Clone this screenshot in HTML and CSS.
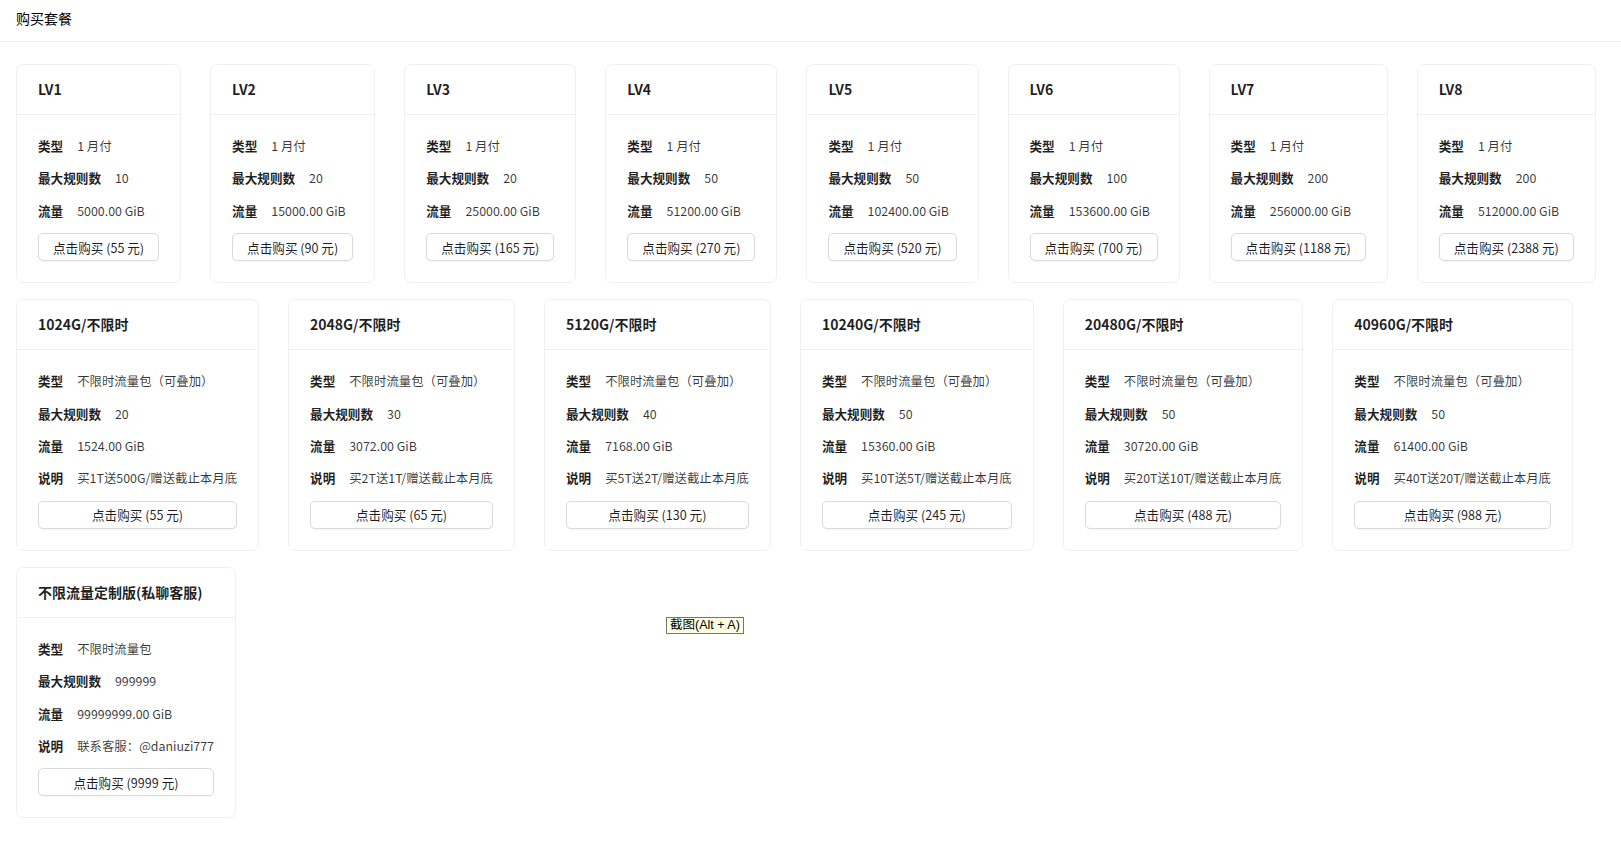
FILE: index.html
```html
<!DOCTYPE html>
<html lang="zh-CN">
<head>
<meta charset="utf-8">
<title>购买套餐</title>
<link rel="stylesheet" href="styles.css">
</head>
<body>
<div class="topbar"><span class="page-title">购买套餐</span></div>
<div class="content">
  <div class="cards">
    <div class="card"><div class="card-head">LV1</div><div class="card-body">
      <div class="row"><span class="lbl">类型</span><span class="val">1 月付</span></div>
      <div class="row"><span class="lbl">最大规则数</span><span class="val">10</span></div>
      <div class="row"><span class="lbl">流量</span><span class="val">5000.00 GiB</span></div>
      <button class="btn">点击购买 (55 元)</button></div></div>
    <div class="card"><div class="card-head">LV2</div><div class="card-body">
      <div class="row"><span class="lbl">类型</span><span class="val">1 月付</span></div>
      <div class="row"><span class="lbl">最大规则数</span><span class="val">20</span></div>
      <div class="row"><span class="lbl">流量</span><span class="val">15000.00 GiB</span></div>
      <button class="btn">点击购买 (90 元)</button></div></div>
    <div class="card"><div class="card-head">LV3</div><div class="card-body">
      <div class="row"><span class="lbl">类型</span><span class="val">1 月付</span></div>
      <div class="row"><span class="lbl">最大规则数</span><span class="val">20</span></div>
      <div class="row"><span class="lbl">流量</span><span class="val">25000.00 GiB</span></div>
      <button class="btn">点击购买 (165 元)</button></div></div>
    <div class="card"><div class="card-head">LV4</div><div class="card-body">
      <div class="row"><span class="lbl">类型</span><span class="val">1 月付</span></div>
      <div class="row"><span class="lbl">最大规则数</span><span class="val">50</span></div>
      <div class="row"><span class="lbl">流量</span><span class="val">51200.00 GiB</span></div>
      <button class="btn">点击购买 (270 元)</button></div></div>
    <div class="card"><div class="card-head">LV5</div><div class="card-body">
      <div class="row"><span class="lbl">类型</span><span class="val">1 月付</span></div>
      <div class="row"><span class="lbl">最大规则数</span><span class="val">50</span></div>
      <div class="row"><span class="lbl">流量</span><span class="val">102400.00 GiB</span></div>
      <button class="btn">点击购买 (520 元)</button></div></div>
    <div class="card"><div class="card-head">LV6</div><div class="card-body">
      <div class="row"><span class="lbl">类型</span><span class="val">1 月付</span></div>
      <div class="row"><span class="lbl">最大规则数</span><span class="val">100</span></div>
      <div class="row"><span class="lbl">流量</span><span class="val">153600.00 GiB</span></div>
      <button class="btn">点击购买 (700 元)</button></div></div>
    <div class="card"><div class="card-head">LV7</div><div class="card-body">
      <div class="row"><span class="lbl">类型</span><span class="val">1 月付</span></div>
      <div class="row"><span class="lbl">最大规则数</span><span class="val">200</span></div>
      <div class="row"><span class="lbl">流量</span><span class="val">256000.00 GiB</span></div>
      <button class="btn">点击购买 (1188 元)</button></div></div>
    <div class="card"><div class="card-head">LV8</div><div class="card-body">
      <div class="row"><span class="lbl">类型</span><span class="val">1 月付</span></div>
      <div class="row"><span class="lbl">最大规则数</span><span class="val">200</span></div>
      <div class="row"><span class="lbl">流量</span><span class="val">512000.00 GiB</span></div>
      <button class="btn">点击购买 (2388 元)</button></div></div>

    <div class="card"><div class="card-head">1024G/不限时</div><div class="card-body">
      <div class="row"><span class="lbl">类型</span><span class="val">不限时流量包（可叠加）</span></div>
      <div class="row"><span class="lbl">最大规则数</span><span class="val">20</span></div>
      <div class="row"><span class="lbl">流量</span><span class="val">1524.00 GiB</span></div>
      <div class="row"><span class="lbl">说明</span><span class="val">买1T送500G/赠送截止本月底</span></div>
      <button class="btn">点击购买 (55 元)</button></div></div>
    <div class="card"><div class="card-head">2048G/不限时</div><div class="card-body">
      <div class="row"><span class="lbl">类型</span><span class="val">不限时流量包（可叠加）</span></div>
      <div class="row"><span class="lbl">最大规则数</span><span class="val">30</span></div>
      <div class="row"><span class="lbl">流量</span><span class="val">3072.00 GiB</span></div>
      <div class="row"><span class="lbl">说明</span><span class="val">买2T送1T/赠送截止本月底</span></div>
      <button class="btn">点击购买 (65 元)</button></div></div>
    <div class="card"><div class="card-head">5120G/不限时</div><div class="card-body">
      <div class="row"><span class="lbl">类型</span><span class="val">不限时流量包（可叠加）</span></div>
      <div class="row"><span class="lbl">最大规则数</span><span class="val">40</span></div>
      <div class="row"><span class="lbl">流量</span><span class="val">7168.00 GiB</span></div>
      <div class="row"><span class="lbl">说明</span><span class="val">买5T送2T/赠送截止本月底</span></div>
      <button class="btn">点击购买 (130 元)</button></div></div>
    <div class="card"><div class="card-head">10240G/不限时</div><div class="card-body">
      <div class="row"><span class="lbl">类型</span><span class="val">不限时流量包（可叠加）</span></div>
      <div class="row"><span class="lbl">最大规则数</span><span class="val">50</span></div>
      <div class="row"><span class="lbl">流量</span><span class="val">15360.00 GiB</span></div>
      <div class="row"><span class="lbl">说明</span><span class="val">买10T送5T/赠送截止本月底</span></div>
      <button class="btn">点击购买 (245 元)</button></div></div>
    <div class="card"><div class="card-head">20480G/不限时</div><div class="card-body">
      <div class="row"><span class="lbl">类型</span><span class="val">不限时流量包（可叠加）</span></div>
      <div class="row"><span class="lbl">最大规则数</span><span class="val">50</span></div>
      <div class="row"><span class="lbl">流量</span><span class="val">30720.00 GiB</span></div>
      <div class="row"><span class="lbl">说明</span><span class="val">买20T送10T/赠送截止本月底</span></div>
      <button class="btn">点击购买 (488 元)</button></div></div>
    <div class="card"><div class="card-head">40960G/不限时</div><div class="card-body">
      <div class="row"><span class="lbl">类型</span><span class="val">不限时流量包（可叠加）</span></div>
      <div class="row"><span class="lbl">最大规则数</span><span class="val">50</span></div>
      <div class="row"><span class="lbl">流量</span><span class="val">61400.00 GiB</span></div>
      <div class="row"><span class="lbl">说明</span><span class="val">买40T送20T/赠送截止本月底</span></div>
      <button class="btn">点击购买 (988 元)</button></div></div>

    <div class="card"><div class="card-head">不限流量定制版(私聊客服)</div><div class="card-body">
      <div class="row"><span class="lbl">类型</span><span class="val">不限时流量包</span></div>
      <div class="row"><span class="lbl">最大规则数</span><span class="val">999999</span></div>
      <div class="row"><span class="lbl">流量</span><span class="val">99999999.00 GiB</span></div>
      <div class="row"><span class="lbl">说明</span><span class="val">联系客服：@daniuzi777</span></div>
      <button class="btn">点击购买 (9999 元)</button></div></div>
  </div>
</div>
<div class="tooltip">截图(Alt + A)</div>
</body>
</html>
```
FILE: styles.css
```css
html, body {
  margin: 0;
  padding: 0;
  background: #ffffff;
}
body {
  font-family: "Noto Sans CJK SC", "Noto Sans", sans-serif;
  font-size: 12.6px;
  color: rgba(0, 0, 0, 0.88);
  position: relative;
  min-height: 842px;
}
.topbar {
  height: 41px;
  border-bottom: 1px solid #f0f0f0;
  padding: 0 16px;
}
.page-title {
  display: block;
  line-height: 36px;
  font-size: 14px;
  color: #000;
}
.content {
  padding: 22px 16px 0 16px;
}
.cards {
  display: flex;
  flex-wrap: wrap;
  align-items: flex-start;
  column-gap: 29px;
  row-gap: 16px;
}
.card {
  flex: 0 0 auto;
  display: flex;
  flex-direction: column;
  border: 1px solid #f0f0f0;
  border-radius: 7px;
  background: #fff;
}
.card-head {
  height: 49px;
  line-height: 49px;
  padding: 0 21px;
  border-bottom: 1px solid #f0f0f0;
  font-size: 14px;
  font-weight: 600;
  color: rgba(0, 0, 0, 0.88);
  white-space: nowrap;
}
.card-body {
  display: flex;
  flex-direction: column;
  padding: 20px 21px 21px 21px;
}
.row {
  display: flex;
  height: 22px;
  line-height: 22px;
  margin-bottom: 10.4px;
  white-space: nowrap;
}
.lbl {
  font-weight: 600;
  color: rgba(0, 0, 0, 0.88);
  margin-right: 14px;
}
.val {
  font-size: 12.4px;
  color: rgba(0, 0, 0, 0.78);
}
.btn {
  align-self: stretch;
  margin-top: 1px;
  height: 28px;
  padding: 0 14px;
  font-family: inherit;
  font-size: 12.6px;
  color: rgba(0, 0, 0, 0.88);
  background: #fff;
  border: 1px solid #d9d9d9;
  border-radius: 5px;
  box-shadow: 0 2px 0 rgba(0, 0, 0, 0.02);
  white-space: nowrap;
  cursor: pointer;
}
.tooltip {
  position: absolute;
  left: 666px;
  top: 617px;
  height: 17px;
  line-height: 15px;
  padding: 0 3px;
  box-sizing: border-box;
  background: #ffffe1;
  border: 1px solid #767676;
  font-family: "Liberation Sans", "Noto Sans CJK SC", sans-serif;
  font-size: 12.5px;
  color: #000;
  white-space: nowrap;
}
```
